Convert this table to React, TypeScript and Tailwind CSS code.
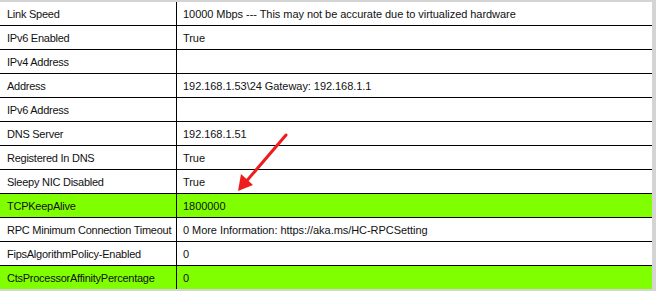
const rows: { name: string; value: string; highlight?: boolean }[] = [
  { name: 'Link Speed', value: '10000 Mbps --- This may not be accurate due to virtualized hardware' },
  { name: 'IPv6 Enabled', value: 'True' },
  { name: 'IPv4 Address', value: '' },
  { name: 'Address', value: '192.168.1.53\\24 Gateway: 192.168.1.1' },
  { name: 'IPv6 Address', value: '' },
  { name: 'DNS Server', value: '192.168.1.51' },
  { name: 'Registered In DNS', value: 'True' },
  { name: 'Sleepy NIC Disabled', value: 'True' },
  { name: 'TCPKeepAlive', value: '1800000', highlight: true },
  { name: 'RPC Minimum Connection Timeout', value: '0 More Information: https://aka.ms/HC-RPCSetting' },
  { name: 'FipsAlgorithmPolicy-Enabled', value: '0' },
  { name: 'CtsProcessorAffinityPercentage', value: '0', highlight: true },
];

export default function App() {
  return (
    <div className="w-[656px] h-[291px] bg-[#d4d4d4] pt-[2px] pb-[2px] pr-[4px] font-['Liberation_Sans',Arial,sans-serif] text-[11px] text-[#111]">
      <div className="relative bg-white">
        {rows.map((row, i) => (
          <div
            key={row.name}
            className={`flex whitespace-nowrap ${i < rows.length - 1 ? 'h-[24px] border-b border-black' : 'h-[23px]'} ${row.highlight ? 'bg-[#80ff00]' : 'bg-white'}`}
          >
            <div className="w-[177px] shrink-0 border-r border-black pl-[7px] pt-[1px] tracking-[-0.25px] flex items-center">{row.name}</div>
            <div className="flex-1 pl-[6px] pt-[1px] tracking-[-0.05px] flex items-center">{row.value}</div>
          </div>
        ))}

        {/* red pointer arrow */}
        <svg className="absolute left-[230px] top-[125px] pointer-events-none" width="64" height="70" viewBox="0 0 64 70">
          <line x1="56" y1="8" x2="14" y2="57" stroke="#ee1c1c" strokeWidth="3" strokeLinecap="round" />
          <polygon points="8,64 11,47 23,58" fill="#ee1c1c" />
        </svg>
      </div>
    </div>
  );
}
